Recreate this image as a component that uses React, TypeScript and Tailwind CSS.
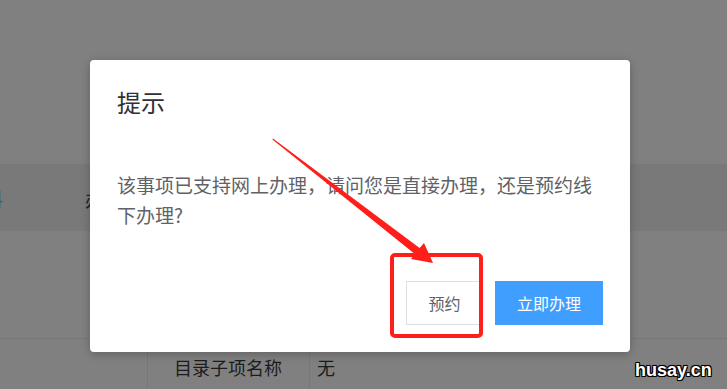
import React from "react";

const cjk = "font-['Noto_Sans_CJK_SC','Noto_Sans',sans-serif]";

function Backdrop() {
  return (
    <div className="flex flex-col w-full h-full">
      <div className="h-[164px] shrink-0" />
      {/* dimmed header band of the page below */}
      <div className="h-[67px] shrink-0 bg-[#797979] flex items-center">
        <span className="ml-[-15px] text-[18px] leading-[30px] text-[#2b5f93]">料</span>
        <span className="ml-[82px] text-[18px] leading-[30px] text-[#1c1c1c] mt-[3px]">办理</span>
      </div>
      <div className="h-[107px] shrink-0" />
      <div className="flex flex-1 border-t border-[#777777]">
        <div className="w-[148px] border-r border-[#777777]" />
        <div className="w-[162px] border-r border-[#777777] pl-[26px] pt-[13px] text-[18px] leading-[30px] text-[#1c1c1c]">
          目录子项名称
        </div>
        <div className="pl-[7px] pt-[13px] text-[18px] leading-[30px] text-[#1c1c1c]">无</div>
      </div>
    </div>
  );
}

function Dialog() {
  return (
    <div className="absolute left-[90px] top-[60px] w-[540px] h-[292px] bg-white rounded-[4px] shadow-[0_2px_10px_rgba(0,0,0,0.25)] px-[27px] pt-[27px] pb-[27px] flex flex-col">
      <div className="text-[24px] leading-[30px] text-[#303133]">提示</div>
      <p className="mt-[53px] text-[19px] leading-[30px] text-[#606266]">
        该事项已支持网上办理，请问您是直接办理，还是预约线下办理?
      </p>
      <div className="mt-auto flex justify-end gap-[12px]">
        <button className="w-[77px] h-[44px] border border-[#dcdfe6] bg-white text-[16px] text-[#606266]">
          预约
        </button>
        <button className="w-[108px] h-[44px] bg-[#409eff] text-[16px] text-white">
          立即办理
        </button>
      </div>
    </div>
  );
}

function Annotation() {
  return (
    <>
      <div className="absolute left-[390px] top-[253px] w-[93px] h-[85px] border-4 border-[#ff1f1a] rounded-[5px]" />
      <svg className="absolute left-0 top-0" width="727" height="389" viewBox="0 0 727 389">
        <path
          d="M273 138.4 L419.6 248 L424 243 L433 263 L411 259 L414.8 254 L272.4 139.4 Z"
          fill="#ff1f1a"
        />
      </svg>
    </>
  );
}

export default function App() {
  return (
    <div className={`relative w-[727px] h-[389px] overflow-hidden bg-[#808080] ${cjk}`}>
      <Backdrop />
      <Dialog />
      <Annotation />
      <div className="absolute left-[635px] top-[359px] font-['Liberation_Sans',Arial,sans-serif] font-bold text-[18px] leading-[22px] text-white [text-shadow:1px_1px_0_#000,-1px_-1px_0_#000,1px_-1px_0_#000,-1px_1px_0_#000,0_0_2px_#000]">
        husay.cn
      </div>
    </div>
  );
}
